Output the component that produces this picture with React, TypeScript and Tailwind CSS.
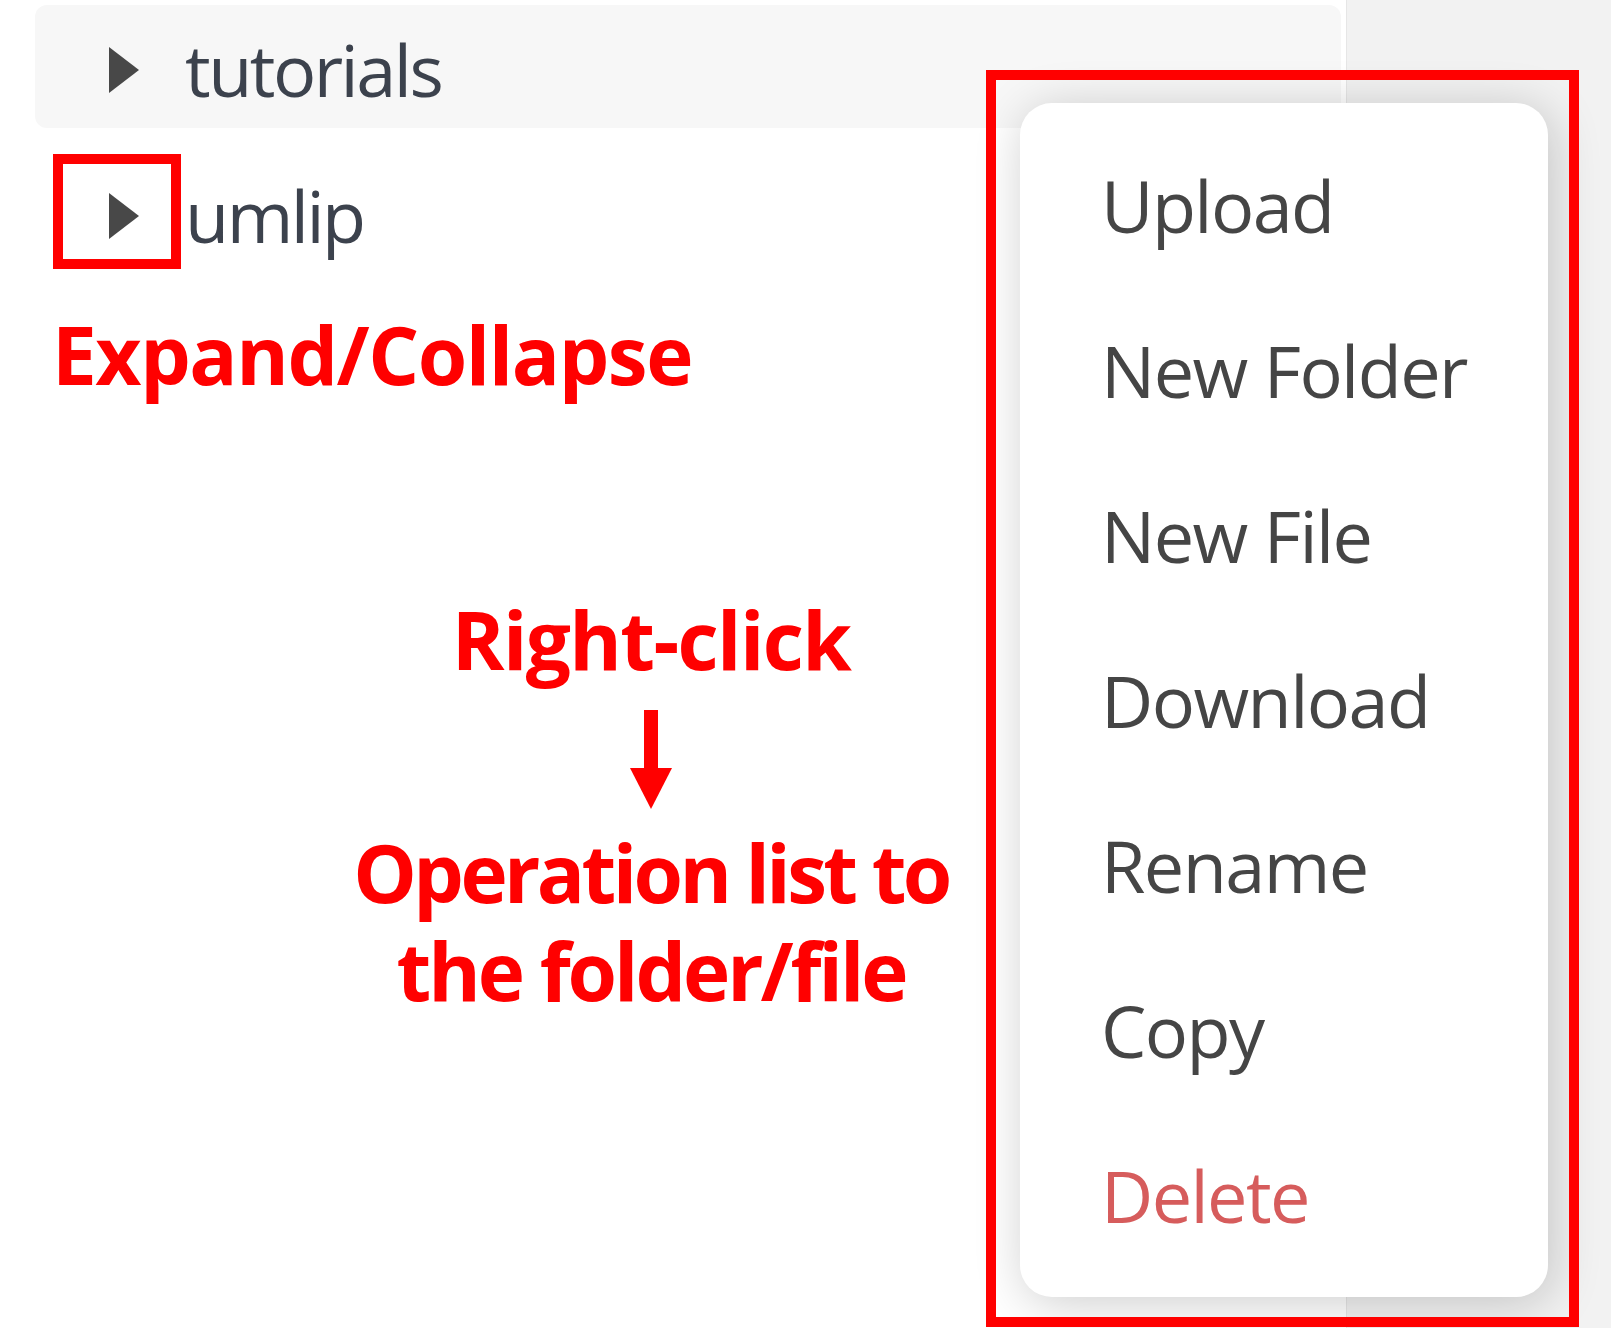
import React from 'react';

const menuItems = ['Upload', 'New Folder', 'New File', 'Download', 'Rename', 'Copy'];

const Caret: React.FC = () => (
  <svg width="32" height="48" viewBox="0 0 32 48" className="shrink-0">
    <polygon points="1,1 31,24 1,47" fill="#484848" />
  </svg>
);

const TreeRow: React.FC<{ label: string; active?: boolean }> = ({ label, active }) => (
  <div
    className={`flex items-center h-[123px] rounded-[12px] pl-[73px] ${active ? 'bg-[#f7f7f7]' : ''}`}
  >
    <div className="mt-[7px]">
      <Caret />
    </div>
    <span className="ml-[45px] pt-[5px] text-[72px] leading-[123px] tracking-[-0.035em] text-[#3c424d]">
      {label}
    </span>
  </div>
);

const App: React.FC = () => {
  return (
    <div className="relative flex w-[1611px] h-[1328px] bg-white overflow-hidden font-['Open_Sans',sans-serif]">
      {/* file tree */}
      <div className="w-[1346px] shrink-0 flex flex-col pt-[5px] pl-[35px] pr-[5px]">
        <div className="flex flex-col gap-[23px]">
          <TreeRow label="tutorials" active />
          <TreeRow label="umlip" />
        </div>

        <div className="mt-[30px] ml-[17px] text-[80px] leading-[100px] font-bold tracking-[-0.018em] text-[#ff0000]">
          Expand/Collapse
        </div>

        <div className="mt-[185px] -ml-[35px] w-[1302px] flex flex-col items-center text-[80px] font-bold text-[#ff0000]">
          <div className="leading-[100px] tracking-[-0.02em]">Right-click</div>
          <svg width="44" height="100" viewBox="0 0 44 100" className="mt-[21px]">
            <rect x="15" y="0" width="14" height="60" fill="#ff0000" />
            <polygon points="1,58 43,58 22,99" fill="#ff0000" />
          </svg>
          <div className="mt-[13px] leading-[98px] tracking-[-0.045em]">Operation list to</div>
          <div className="leading-[98px] tracking-[-0.038em]">the folder/file</div>
        </div>
      </div>

      {/* right side panel */}
      <div className="flex-1 bg-[#f2f2f2] border-l border-[#e6e6e6]" />

      {/* annotation box around caret */}
      <div className="absolute left-[53px] top-[154px] w-[128px] h-[115px] border-[10px] border-[#ff0000]" />

      {/* context menu */}
      <div className="absolute left-[1020px] top-[103px] w-[528px] h-[1194px] rounded-[32px] bg-white shadow-[4px_6px_50px_rgba(0,0,0,0.2)] pt-[20px] pl-[81px]">
        {menuItems.map((item) => (
          <div key={item} className="h-[165px] text-[72px] leading-[165px] tracking-[-0.022em] text-[#454545]">
            {item}
          </div>
        ))}
        <div className="h-[165px] text-[72px] leading-[165px] tracking-[-0.022em] text-[#d65c5c]">Delete</div>
      </div>

      {/* annotation box around menu */}
      <div className="absolute left-[986px] top-[70px] w-[593px] h-[1257px] border-[10px] border-[#ff0000]" />
    </div>
  );
};

export default App;
